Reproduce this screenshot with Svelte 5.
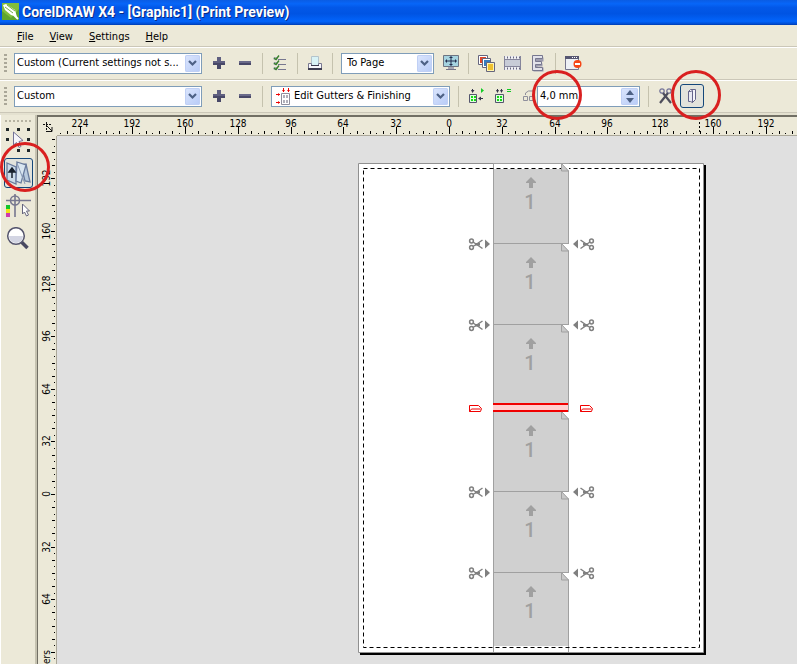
<script>
  const H_UNIT = 6.594;
  const V_UNIT = 6.575;
  const hZero = 392;
  const vZero = 358;

  let hWidth = $state(740);
  let vHeight = $state(528);

  const hTicks = $derived(
    Array.from({ length: 500 }, (_, i) => i - 60).filter((i) => hZero + i * H_UNIT > 2 && hZero + i * H_UNIT < hWidth)
  );
  const vTicks = $derived(
    Array.from({ length: 300 }, (_, i) => i - 56).filter((i) => vZero + i * V_UNIT > 2 && vZero + i * V_UNIT < vHeight)
  );
  const kind = (i) => (i % 8 === 0 ? 7 : i % 2 === 0 ? 3 : 1);
  const labelled = (i, pos, size) => i % 8 === 0 && pos > 12 && pos < size - 12;

  const cells = [163, 243, 324, 411, 491, 572];
  const cuts = [244, 325, 492, 573];
</script>

{#snippet plus()}
  <svg width="14" height="14" viewBox="0 0 14 14"><path d="M5 1h4v4h4v4H9v4H5V9H1V5h4z" fill="#5f5f80" /><path d="M5 9h4v4H5zM1 7h12v2H1z" fill="#484868" /></svg>
{/snippet}
{#snippet minus()}
  <svg width="14" height="14" viewBox="0 0 14 14"><path d="M1 5h12v4H1z" fill="#6a6a8a" /><path d="M1 7h12v2H1z" fill="#484868" /></svg>
{/snippet}
{#snippet chevron()}
  <span class="arrow"><svg width="9" height="7" viewBox="0 0 9 7"><path d="M1 1l3.500 3.500L8 1" fill="none" stroke="#4d6185" stroke-width="2.200" /></svg></span>
{/snippet}
{#snippet scissors()}
  <g fill="none" stroke="#808080" stroke-width="1.500">
    <circle cx="2.500" cy="-3" r="1.900" /><circle cx="2.500" cy="3.500" r="1.900" />
    <path d="M4 -2L7 0L13.500 4.500M4 2.500L7 .5L13.500 -4" /><path d="M6 -1h5v2.500H6z" fill="#808080" stroke="none" />
  </g>
  <path d="M16 -4.500v9l5-4.500z" fill="#808080" />
{/snippet}

<div class="app">
  <header class="title">
    <svg width="17" height="17" viewBox="0 0 17 17">
      <path d="M0 0h17v17H0z" fill="#5fa52e" /><path d="M0 0h17v6L9 15 0 8z" fill="#82bd3c" />
      <path d="M1 2l3-1 9 6 2 7-6-2-6-5z" fill="#fff" /><path d="M3 4l8 6M5 2l8 6" stroke="#75ae43" /><path d="M12 12l4 4" stroke="#fff" stroke-width="2" />
    </svg>
    <h1>CorelDRAW X4 - [Graphic1] (Print Preview)</h1>
  </header>

  <nav class="menu">
    <button><u>F</u>ile</button>
    <button><u>V</u>iew</button>
    <button><u>S</u>ettings</button>
    <button><u>H</u>elp</button>
  </nav>

  <div class="bar">
    <span class="grip"></span>
    <span class="combo wide">
      <select aria-label="Print style"><option>Custom (Current settings not s...</option></select>
      {@render chevron()}
    </span>
    <button class="tool" aria-label="Add print style">{@render plus()}</button>
    <button class="tool" aria-label="Remove print style">{@render minus()}</button>
    <span class="sep"></span>
    <button class="tool" aria-label="Options">
      <svg width="14" height="16" viewBox="0 0 14 16">
        <path d="M5 4.500h8M5 9.500h8M5 14.500h8" stroke="#77778f" /><path d="M1 2.500h3v2H1zM1 7.500h3v2H1zM1 12.500h3v2H1z" fill="none" stroke="#aaaab8" />
        <path d="M1 3l2 1.500L6 .5M1 8l2 1.500 3-4M1 13l2 1.500 3-4" fill="none" stroke="#38812b" stroke-width="1.400" />
      </svg>
    </button>
    <span class="sep"></span>
    <button class="tool" aria-label="Print">
      <svg width="14" height="14" viewBox="0 0 14 14">
        <path d="M3.500.5h7v9h-7z" fill="#d9f3f6" stroke="#b4c4cc" /><path d="M.5 7.500h3v2h7v-2h3v5H.5z" fill="#f6f6fa" stroke="#77778f" /><path d="M0 13h14" stroke="#3c3c50" stroke-width="2" /><path d="M3 9.500h8" stroke="#3c3c50" />
      </svg>
    </button>
    <span class="sep"></span>
    <span class="combo zoom">
      <select aria-label="Zoom"><option>To Page</option></select>
      {@render chevron()}
    </span>
    <button class="tool" aria-label="Full screen">
      <svg width="16" height="16" viewBox="0 0 16 16">
        <path d="M.5.5h15v11H.5z" fill="#a5d3e0" stroke="#6d7482" /><path d="M5 12h6v2H5z" fill="#a7a7b4" /><path d="M3 14.500h10" stroke="#747487" />
        <path d="M8 2v8M3 6h10" stroke="#222d4e" /><path d="M8 1l2 2H6zM8 11l2-2H6zM2 6l2-2v4zM14 6l-2-2v4z" fill="#222d4e" />
      </svg>
    </button>
    <span class="sep"></span>
    <button class="tool" aria-label="Enable colour separations">
      <svg width="17" height="17" viewBox="0 0 17 17">
        <path d="M.5.5h9v9h-9z" fill="#fff" stroke="#65657e" /><path d="M2 2h6v6H2z" fill="#e34426" />
        <path d="M4.500 3.500h8v9h-8z" fill="#fff" stroke="#65657e" /><path d="M6 5h6v6H6z" fill="#367bc0" />
        <path d="M8.500 7.500h8v9h-8z" fill="#fff4b0" stroke="#65657e" /><path d="M10 9h5v6h-5z" fill="#eec02e" />
      </svg>
    </button>
    <button class="tool" aria-label="Invert">
      <svg width="17" height="14" viewBox="0 0 17 14">
        <path d="M0 0h17v14H0z" fill="#eeeef2" /><path d="M0 1.500h17M0 12.500h17" stroke="#66667f" stroke-dasharray="1 2" stroke-width="2" /><path d="M0 3.500h17M0 10.500h17M.5 0v14M16.500 0v14" stroke="#85859b" /><path d="M1 4h15v6H1z" fill="#c8ccd7" />
      </svg>
    </button>
    <button class="tool" aria-label="Mirror">
      <svg width="14" height="17" viewBox="0 0 14 17"><path d="M2.500 2.500h10v4h-6v2h5v3h-5v1h6v4h-10z" fill="#9c9caf" /><path d="M1.500.5h10v3h-7v3h6v3h-6v3h7v3h-10z" fill="#e2e2ea" stroke="#77778f" /></svg>
    </button>
    <span class="sep"></span>
    <button class="tool" aria-label="Close print preview">
      <svg width="17" height="14" viewBox="0 0 17 14">
        <path d="M.5.5h13v13H.5z" fill="#edf0f5" stroke="#74748c" /><path d="M0 0h14v3H0z" fill="#565671" /><path d="M7 1h1v1H7zM9 1h1v1H9zM11 1h1v1h-1z" fill="#fff" />
        <circle cx="12.500" cy="8" r="4" fill="#f54616" /><path d="M10 8h5" stroke="#fff" stroke-width="2" />
      </svg>
    </button>
  </div>

  <div class="bar second">
    <span class="grip"></span>
    <span class="combo wide">
      <select aria-label="Imposition layout"><option>Custom</option></select>
      {@render chevron()}
    </span>
    <button class="tool" aria-label="Add layout">{@render plus()}</button>
    <button class="tool" aria-label="Remove layout">{@render minus()}</button>
    <span class="sep"></span>
    <span class="combo edit">
      <select aria-label="What to edit"><option>Edit Gutters &amp; Finishing</option></select>
      <svg class="lead" width="15" height="17" viewBox="0 0 15 17">
        <path d="M5.500 5.500h8v11h-8z" fill="#fff" stroke="#8f8f9d" /><path d="M7 7h2v3H7zM10 7h2v3h-2zM7 12h2v3H7zM10 12h2v3h-2z" fill="#b0b0ba" />
        <path d="M7.500 0v4M12.500 0v4M0 6.500h4M0 14.500h4" stroke="#e00" /><path d="M6 2h3l-1.500 2zM11 2h3l-1.500 2zM2 5v3l2-1.500zM2 13v3l2-1.500z" fill="#e00" />
      </svg>
      {@render chevron()}
    </span>
    <span class="sep"></span>
    <button class="tool" aria-label="Auto gutter spacing">
      <svg width="16" height="16" viewBox="0 0 16 16">
        <path d="M1.500 6.500h7v8h-7z" fill="#dfd" stroke="#55556e" /><path d="M3 8h2v2H3zM6 8h2v2H6zM3 11h2v2H3zM6 11h2v2H6z" fill="#18d818" />
        <path d="M4.500 1v3M11 10.500h4" stroke="#333349" /><path d="M3 2h3.500L4.500 5zM10 10.500l3-2v4z" fill="#333349" /><path d="M13 0v5l3-2.500z" fill="#13cb25" />
      </svg>
    </button>
    <button class="tool" aria-label="Equal gutters">
      <svg width="17" height="16" viewBox="0 0 17 16">
        <path d="M1.500 6.500h8v8h-8z" fill="#dfd" stroke="#55556e" /><path d="M3 8h2v2H3zM6 8h2v2H6zM3 11h2v2H3zM6 11h2v2H6z" fill="#18d818" />
        <path d="M3.500 1v3M7.500 1v3" stroke="#333349" /><path d="M2 2h3L3.500 5zM6 2h3L7.500 5z" fill="#333349" /><path d="M13 1.500h4M13 3.500h4" stroke="#13cb25" />
      </svg>
    </button>
    <label class="gutter" for="gutter" aria-label="Gutter size">
      <svg width="13" height="12" viewBox="0 0 13 12" fill="none" stroke="#8f8f9c"><path d="M.5 6.500h4v4h-4zM6.500 6.500h4v4h-4zM2.500 5V3l3-2h5v4" /></svg>
    </label>
    <span class="combo spin">
      <input id="gutter" value="4,0 mm" />
      <span class="updown">
        <button aria-label="Increase"><svg width="8" height="5" viewBox="0 0 8 5"><path d="M0 5l4-5 4 5z" fill="#4d6185" /></svg></button>
        <button aria-label="Decrease"><svg width="8" height="5" viewBox="0 0 8 5"><path d="M0 0l4 5 4-5z" fill="#4d6185" /></svg></button>
      </span>
    </span>
    <span class="sep"></span>
    <button class="tool" aria-label="Cut location">
      <svg width="14" height="16" viewBox="0 0 14 16" fill="none"><circle cx="3" cy="3" r="2.200" stroke="#77779a" stroke-width="1.300" /><circle cx="10" cy="3" r="2.200" stroke="#77779a" stroke-width="1.300" /><path d="M4 5l8 10M9 5L1 15" stroke="#4e4e5c" stroke-width="2.200" /></svg>
    </button>
    <button class="tool pressed" aria-label="Fold location" aria-pressed="true">
      <svg width="10" height="16" viewBox="0 0 10 16"><path d="M1.500 3.500l2-2h5v10l-3 3v-11z" fill="#f5f5fa" stroke="#65658a" /><path d="M1.500 3.500h2l2-1v12l-2-1h-2z" fill="#e9eaf3" stroke="#65658a" /></svg>
    </button>
  </div>

  <main>
    <aside>
      <span class="hgrip"></span>
      <button aria-label="Pick tool">
        <svg width="25" height="26" viewBox="0 0 25 26">
          <path d="M0 1h3v3H0zM11 1h3v3h-3zM21 1h3v3h-3zM0 11h3v3H0zM21 11h3v3h-3zM11 22h3v3h-3zM21 22h3v3h-3z" fill="#20282a" />
          <path d="M7.500 5v13l3-2.500 2.500 5 2-1-2-5 4-1z" fill="#f5f5fb" stroke="#737396" />
        </svg>
      </button>
      <button class="pressed" aria-label="Imposition layout tool" aria-pressed="true">
        <svg width="25" height="25" viewBox="0 0 25 25">
          <path d="M1 2l9 4v17L1 19z" fill="#cbdbe9" stroke="#697b9d" stroke-width="1.300" />
          <path d="M15 4l5-1 4 18-5-1z" fill="#b9cbdf" stroke="#697b9d" stroke-width="1.300" />
          <path d="M11 1l9 3-5 18-5-2z" fill="#d9e6f1" stroke="#697b9d" stroke-width="1.300" /><path d="M11 2l8 21" stroke="#8798b4" />
          <path d="M6 9v8M3 11l3-4 3 4z" fill="#17202c" stroke="#17202c" stroke-width="1.500" />
        </svg>
      </button>
      <button aria-label="Marks placement tool">
        <svg width="25" height="25" viewBox="0 0 25 25">
          <path d="M0 6.500h25M9 0v23" stroke="#77778f" stroke-width="1.600" /><circle cx="9" cy="6.500" r="4.500" fill="none" stroke="#77778f" stroke-width="1.500" />
          <path d="M0 11h4v4H0z" fill="#13c62a" /><path d="M0 15h4v4H0z" fill="#f0e316" /><path d="M0 19h4v4H0z" fill="#cf3bae" />
          <path d="M16.500 10v10l2-2 2 4 2-1-2-4h3z" fill="#fff" stroke="#65657e" />
        </svg>
      </button>
      <button aria-label="Zoom tool">
        <svg width="25" height="25" viewBox="0 0 25 25">
          <path d="M15.500 15l6 6" stroke="#484860" stroke-width="3.500" /><circle cx="10" cy="9" r="8.300" fill="#fff" stroke="#55556e" stroke-width="1.500" /><path d="M3 9h14a7 7 0 0 1-14 0z" fill="#d3d5e3" />
        </svg>
      </button>
    </aside>

    <div class="view">
      <div class="corner">
        <svg width="19" height="19" viewBox="0 0 19 19"><path d="M8.500 5v10M5 7.500h9" stroke="#111" stroke-dasharray="2 1" /><path d="M9 9l5 5M14 10v4.500h-5" fill="none" stroke="#111" /></svg>
      </div>
      <div class="hruler" bind:clientWidth={hWidth}>
        <svg height="18" width="100%">
          {#each hTicks as i}
            {@const x = Math.round(hZero + i * H_UNIT)}
            <rect {x} y={17 - kind(i)} width="1" height={kind(i)} />
            {#if labelled(i, x, hWidth)}<text {x} y="10" text-anchor="middle">{Math.abs(i) * 4}</text>{/if}
          {/each}
          <path d="M642.500 5v12" stroke="#000" stroke-dasharray="2 2" />
        </svg>
      </div>
      <div class="vruler" bind:clientHeight={vHeight}>
        <svg width="18" height="100%">
          {#each vTicks as i}
            {@const y = Math.round(vZero + i * V_UNIT)}
            <rect x={17 - Math.min(kind(i), 4)} {y} width={Math.min(kind(i), 4)} height="1" />
            {#if labelled(i, y, vHeight) && i !== 24}<text transform="translate(12 {y}) rotate(-90)" text-anchor="middle">{Math.abs(i) * 4}</text>{/if}
          {/each}
          <text transform="translate(12 514) rotate(-90)" text-anchor="end">ers</text>
        </svg>
      </div>
      <div class="canvas">
        <svg class="sheet" width="348" height="492" viewBox="358 163 348 492">
          <path d="M360 165h346v490H360z" fill="#000" />
          <path d="M358.500 163.500h345v489h-345z" fill="#fff" stroke="#909090" />
          <path d="M494 169h74v477h-74z" fill="#d0d0d0" />
          <path d="M493.500 163v489M568.500 163v489" stroke="#a0a0a0" />
          <path d="M363.500 168.500h336v479h-336z" fill="none" stroke="#000" stroke-dasharray="4 3" />
          {#each cells as y}
            <g transform="translate(0 {y})">
              <path d="M562 1h7v7z" fill="#fff" />
              <path d="M568.500 1v6" stroke="#fff" />
              <path d="M493 .5h75" stroke="#a0a0a0" />
              <path d="M561.500 .5v7.500h7z" fill="#c8c8c8" stroke="#a0a0a0" />
              <path d="M531 14l5 5v1h-3v5h-4v-5h-3v-1z" fill="#a0a0a0" />
              <text class="num" x="530" y="46" text-anchor="middle">1</text>
            </g>
          {/each}
          <path d="M493 404h75v8h-75z" fill="#ffd0d0" />
          <path d="M493 404h75M493 411h75" stroke="#f00000" stroke-width="2" />
          {#each cuts as y}
            <g transform="translate(469 {y})">{@render scissors()}</g>
            <g transform="translate(594 {y}) scale(-1 1)">{@render scissors()}</g>
          {/each}
          {#each [469, 580] as x}
            <path transform="translate({x} 405)" d="M.5 6.500v-6h9l3 3-1 3H.5l2-2.500h9" fill="#fff" stroke="#f00000" />
          {/each}
        </svg>
      </div>
    </div>
  </main>

  <span class="ring" style:left="0px" style:top="142px"></span>
  <span class="ring" style:left="532px" style:top="70px"></span>
  <span class="ring" style:left="671px" style:top="70px"></span>
</div>

<style>
  .app {
    position: relative;
    display: flex;
    flex-direction: column;
    height: 100vh;
    overflow: hidden;
    background: #ece9d8;
    color: #000;
    font: 11px/14px "DejaVu Sans Condensed", Tahoma, sans-serif;
  }
  button, select, input { font: inherit; color: inherit; margin: 0; padding: 0; border: 0; background: none; }
  svg { display: block; flex: none; }
  .title {
    display: flex;
    align-items: center;
    gap: 3px;
    height: 25px;
    flex: none;
    padding: 0 0 2px 2px;
    box-sizing: border-box;
    background: linear-gradient(#0a5ce4 0, #0766f8 15%, #0358e8 30%, #0054e3 55%, #0264fb 85%, #0050d8 94%, #003cb0);
  }
  h1 {
    margin: 0;
    color: #fff;
    font: bold 14px/18px Roboto, "Liberation Sans", sans-serif;
    text-shadow: 1px 1px #0a2a84;
    white-space: nowrap;
  }
  .menu {
    display: flex;
    align-items: center;
    gap: 16px;
    height: 21px;
    padding: 2px 17px 0;
    box-sizing: border-box;
    flex: none;
  }
  .menu button { line-height: 18px; }
  .bar {
    display: flex;
    align-items: center;
    height: 33px;
    flex: none;
    box-sizing: border-box;
    border-top: 1px solid #cbc7b8;
    box-shadow: inset 0 1px #fff;
  }
  .second { height: 34px; border-bottom: 1px solid #cbc7b8; }
  .grip {
    width: 3px;
    height: 19px;
    margin: 0 3px 0 4px;
    background: repeating-linear-gradient(#aaa798 0 2px, transparent 2px 4px);
  }
  .combo {
    position: relative;
    display: flex;
    height: 21px;
    box-sizing: border-box;
    margin: 0 4px;
    border: 1px solid #7f9db9;
    background: #fff;
    flex: none;
  }
  .wide { width: 188px; }
  .zoom { width: 93px; }
  .edit { width: 179px; }
  .spin { width: 103px; }
  .combo select, .combo input {
    appearance: none;
    width: 100%;
    padding: 0 0 0 2px;
    outline: none;
    border-radius: 0;
  }
  .zoom select { padding-left: 5px; }
  .edit select { padding-left: 22px; }
  .lead { position: absolute; left: 4px; top: 1px; pointer-events: none; }
  .arrow, .updown {
    position: absolute;
    right: 1px;
    top: 1px;
    width: 15px;
    height: 17px;
    display: flex;
    align-items: center;
    justify-content: center;
    border-radius: 2px;
    background: linear-gradient(135deg, #dce6fd, #b7cbf7);
    box-shadow: inset 0 0 0 1px #c0d0f5;
    pointer-events: none;
  }
  .updown { flex-direction: column; gap: 3px; width: 17px; pointer-events: auto; }
  .updown button { height: 5px; display: flex; }
  .tool {
    width: 26px;
    height: 24px;
    display: flex;
    align-items: center;
    justify-content: center;
    flex: none;
  }
  .sep {
    width: 1px;
    height: 21px;
    margin: 0 4px;
    background: #c5c2ae;
    flex: none;
  }
  .gutter { width: 18px; display: flex; justify-content: flex-end; flex: none; }
  .gutter svg { margin-right: -3px; }
  .pressed {
    border: 1px solid #14477a;
    border-radius: 3px;
    background: #e2e3dc;
    box-sizing: border-box;
  }
  .tool.pressed { width: 24px; margin: 0 1px; }
  main { flex: 1; min-height: 0; display: flex; border-top: 2px solid #e4e1d0; }
  aside {
    width: 37px;
    box-sizing: border-box;
    flex: none;
    display: flex;
    flex-direction: column;
    gap: 3px;
    padding: 5px 1px 0 3px;
    border-left: 1px solid #fff;
    border-right: 2px solid #c5c2b0;
  }
  aside button {
    width: 29px;
    height: 30px;
    display: flex;
    align-items: center;
    justify-content: center;
  }
  .hgrip {
    width: 27px;
    height: 2px;
    margin-left: 1px;
    background: repeating-linear-gradient(90deg, #b5b2a2 0 2px, transparent 2px 4px);
  }
  .view {
    flex: 1;
    min-width: 0;
    display: grid;
    grid-template: 19px 1fr / 19px 1fr;
    border-left: 1px solid #716f64;
    border-top: 2px solid #716f64;
  }
  .corner, .hruler, .vruler { min-width: 0; min-height: 0; overflow: hidden; }
  .hruler { border-bottom: 1px solid #aca899; }
  .vruler { border-right: 1px solid #aca899; }
  .hruler text, .vruler text { font-size: 10px; }
  .canvas { background: #e0e0e0; overflow: hidden; min-height: 0; min-width: 0; }
  .sheet { margin: 27px 0 0 301px; }
  .num { font: 500 20px Roboto, "Liberation Sans", sans-serif; fill: #a0a0a0; }
  .ring {
    position: absolute;
    width: 50px;
    height: 50px;
    box-sizing: border-box;
    border: 3px solid #d92020;
    border-radius: 50%;
    pointer-events: none;
  }
</style>
